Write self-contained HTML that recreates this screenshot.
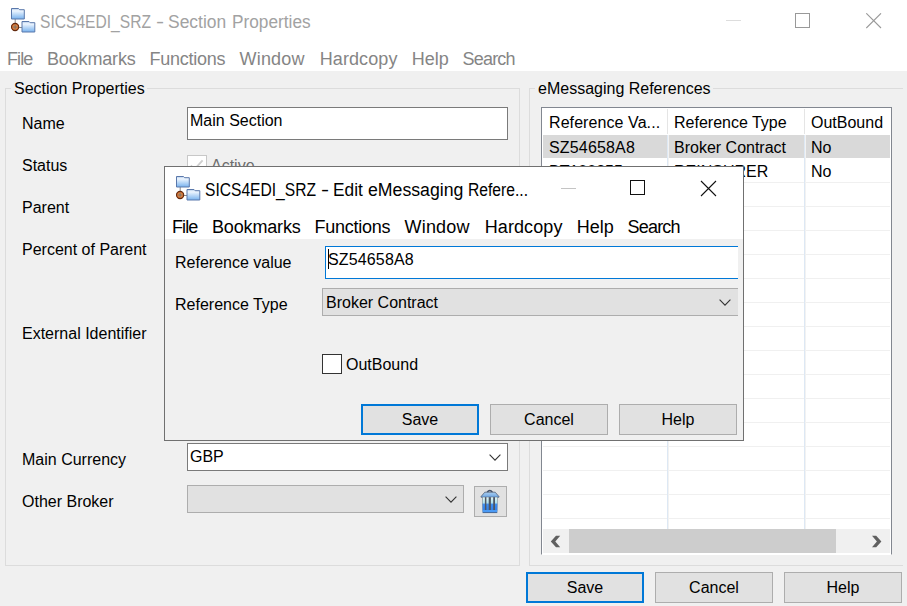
<!DOCTYPE html>
<html><head><meta charset="utf-8">
<style>
*{margin:0;padding:0;box-sizing:border-box}
html,body{width:907px;height:606px;overflow:hidden;background:#f0f0f0;position:relative;font-family:"Liberation Sans",sans-serif;font-size:16px;color:#000}
.a{position:absolute}
.t{position:absolute;white-space:nowrap;line-height:18px;font-size:16px}
.ui{position:absolute;white-space:nowrap;line-height:20px;font-size:18px}
.btn{position:absolute;background:#e1e1e1;border:1px solid #adadad;text-align:center;line-height:28px;padding-top:1px;font-size:16px}
.btn.def{border:2px solid #0078d7;line-height:26px}
.grp{position:absolute;border:1px solid #dcdcdc}
.chev{position:absolute}
</style></head><body>
<!-- main title bar -->
<div class="a" style="left:0;top:0;width:907px;height:71px;background:#fff"></div>
<svg class="a" style="left:10px;top:7px" width="26" height="26" viewBox="0 0 26 26">
<defs><linearGradient id="fg" x1="0" y1="0" x2="0" y2="1"><stop offset="0" stop-color="#b3cbe8"/><stop offset="0.22" stop-color="#eef6ff"/><stop offset="1" stop-color="#78b2ee"/></linearGradient>
<radialGradient id="cg" cx="0.5" cy="0.5" r="0.5"><stop offset="0" stop-color="#ffc070"/><stop offset="1" stop-color="#c85a20"/></radialGradient></defs>
 <path d="M5.2 11.5V17M8 20.5h4" stroke="#8a8a8a" stroke-width="1"/>
 <path d="M1.5 1.5h7l1.2 1.2h4.6v9.3h-12.8z" fill="url(#fg)" stroke="#5a78ab" stroke-width="1"/>
 <path d="M12 14.5h7l1.2 1.2h4.6v9.3h-12.8z" fill="url(#fg)" stroke="#5a78ab" stroke-width="1"/>
 <circle cx="5.1" cy="20" r="3.6" fill="url(#cg)" stroke="#62290e" stroke-width="1.1"/>
 <path d="M2.8 20h4.6M5.1 17.7v4.6" stroke="#6a6060" stroke-width="0.9"/>
</svg>
<div class="ui" style="left:39.6px;top:12px;color:#a2a2a2;transform:scaleX(0.867);transform-origin:0 0;">SICS4EDI_SRZ</div>
<div class="ui" style="left:156px;top:12px;color:#a2a2a2;transform:scaleX(1.35);transform-origin:0 0;">-</div>
<div class="ui" style="left:167.8px;top:12px;color:#a2a2a2;transform:scaleX(0.97);transform-origin:0 0;">Section</div>
<div class="ui" style="left:231.7px;top:12px;color:#a2a2a2;transform:scaleX(0.958);transform-origin:0 0;">Properties</div>
<!-- window controls -->
<div class="a" style="left:726px;top:20px;width:15px;height:1px;background:#ddd"></div>
<div class="a" style="left:795px;top:13px;width:15px;height:15px;border:1px solid #999"></div>
<svg class="a" style="left:866px;top:13px" width="16" height="16" viewBox="0 0 16 16"><path d="M0.3 0.3L15 15M15 0.3L0.3 15" stroke="#999" stroke-width="1.1"/></svg>
<!-- menu -->
<div class="ui" style="left:7px;top:49px;color:#858585;letter-spacing:-0.9px">File</div>
<div class="ui" style="left:47px;top:49px;color:#858585;letter-spacing:-0.16px">Bookmarks</div>
<div class="ui" style="left:149.5px;top:49px;color:#858585;letter-spacing:-0.25px">Functions</div>
<div class="ui" style="left:239.5px;top:49px;color:#858585;letter-spacing:0.2px">Window</div>
<div class="ui" style="left:319.7px;top:49px;color:#858585;letter-spacing:0.1px">Hardcopy</div>
<div class="ui" style="left:411.7px;top:49px;color:#858585;letter-spacing:0px">Help</div>
<div class="ui" style="left:462.5px;top:49px;color:#858585;letter-spacing:-0.8px">Search</div>

<!-- Section Properties group -->
<div class="grp" style="left:5px;top:88px;width:515px;height:478px"></div>
<div class="t" style="left:11px;top:80px;background:#f0f0f0;padding:0 2px 0 3px">Section Properties</div>
<div class="t" style="left:22px;top:115px">Name</div>
<div class="t" style="left:22px;top:157px">Status</div>
<div class="t" style="left:22px;top:199px">Parent</div>
<div class="t" style="left:22px;top:241px">Percent of Parent</div>
<div class="t" style="left:22px;top:325px">External Identifier</div>
<div class="t" style="left:22px;top:451px">Main Currency</div>
<div class="t" style="left:22px;top:493px">Other Broker</div>

<div class="a" style="left:187px;top:107px;width:321px;height:33px;background:#fff;border:1px solid #7a7a7a"></div>
<div class="t" style="left:190px;top:112px">Main Section</div>
<div class="a" style="left:187px;top:155px;width:20px;height:20px;border:1px solid #c8c8c8;background:#fff"></div>
<svg class="a" style="left:189px;top:157px" width="16" height="16"><path d="M1.8 8.5l3.6 3.8 8.2-9" stroke="#cfcfcf" stroke-width="1.9" fill="none"/></svg>
<div class="t" style="left:211px;top:157px;color:#6d6d6d">Active</div>

<div class="a" style="left:187px;top:443px;width:321px;height:28px;background:#fff;border:1px solid #7a7a7a"></div>
<div class="t" style="left:190px;top:448px">GBP</div>
<svg class="a" style="left:489px;top:454px" width="13" height="8"><path d="M0.6 0.6L6 6.2L11.4 0.6" stroke="#333" stroke-width="1.1" fill="none"/></svg>
<div class="a" style="left:187px;top:485px;width:277px;height:28px;background:#e1e1e1;border:1px solid #adadad"></div>
<svg class="a" style="left:445px;top:496px" width="13" height="8"><path d="M0.6 0.6L6 6.2L11.4 0.6" stroke="#333" stroke-width="1.1" fill="none"/></svg>
<div class="a" style="left:474px;top:486px;width:33px;height:31px;background:#e1e1e1;border:1px solid #adadad"></div>
<svg class="a" style="left:480px;top:489px" width="20" height="25" viewBox="0 0 20 25">
 <defs><linearGradient id="tg" x1="0" y1="0" x2="0" y2="1"><stop offset="0" stop-color="#e0f6f6"/><stop offset="0.42" stop-color="#b0e0ec"/><stop offset="0.55" stop-color="#3f8ef0"/><stop offset="1" stop-color="#2f80ec"/></linearGradient>
 <linearGradient id="lg" x1="0" y1="0" x2="0" y2="1"><stop offset="0" stop-color="#a8cdf0"/><stop offset="1" stop-color="#6ea6e2"/></linearGradient></defs>
 <path d="M7 3.4Q9.8 -0.4 12.6 3.4" stroke="#44526a" stroke-width="1.3" fill="none"/>
 <path d="M4.8 3.2H15.2L19 7.6V8.2H1V7.6Z" fill="url(#lg)" stroke="#44526a" stroke-width="0.7"/>
 <path d="M2.2 8.3H17.6L17.2 23.5H2.7Z" fill="#4d5564"/>
 <rect x="2.6" y="8.3" width="2.3" height="13" fill="url(#tg)"/>
 <rect x="6.4" y="8.3" width="2.3" height="13" fill="url(#tg)"/>
 <rect x="10.9" y="8.3" width="2.3" height="13" fill="url(#tg)"/>
 <rect x="15" y="8.3" width="2.3" height="13" fill="url(#tg)"/>
 <path d="M2.5 21H17.3L17.2 23.6H2.7Z" fill="#4a9af5"/>
 <path d="M2.7 23.6H17.2" stroke="#3a5a8a" stroke-width="0.8"/>
</svg>

<!-- eMessaging group -->
<div class="a" style="left:529px;top:88px;width:374px;height:478px;border:1px solid #dcdcdc;border-right:none"></div>
<div class="t" style="left:535px;top:80px;background:#f0f0f0;padding:0 2px 0 3px">eMessaging References</div>
<div class="a" style="left:541px;top:107px;width:351px;height:448px;background:#fff;border:1px solid #828790;border-bottom-color:#fff"></div>
<div class="a" style="left:667px;top:109px;width:1px;height:25px;background:#e5e5e5"></div>
<div class="a" style="left:804px;top:109px;width:1px;height:25px;background:#e5e5e5"></div>
<div class="t" style="left:549px;top:114px;letter-spacing:0.08px">Reference Va...</div>
<div class="t" style="left:674px;top:114px">Reference Type</div>
<div class="t" style="left:811px;top:114px">OutBound</div>
<div class="a" style="left:543px;top:135px;width:124px;height:23px;background:#d9d9d9"></div>
<div class="a" style="left:669px;top:135px;width:135px;height:23px;background:#d9d9d9"></div>
<div class="a" style="left:806px;top:135px;width:84px;height:23px;background:#d9d9d9"></div>
<div class="t" style="left:549px;top:139px;letter-spacing:0.16px">SZ54658A8</div>
<div class="t" style="left:674px;top:139px">Broker Contract</div>
<div class="t" style="left:811px;top:139px">No</div>
<div class="t" style="left:549px;top:163px">BT100255</div>
<div class="t" style="left:674px;top:163px">REINSURER</div>
<div class="t" style="left:811px;top:163px">No</div>
<div class="a" style="left:543px;top:182px;width:347px;height:1px;background:#f0f0f0"></div>
<div class="a" style="left:543px;top:206px;width:347px;height:1px;background:#f0f0f0"></div>
<div class="a" style="left:543px;top:230px;width:347px;height:1px;background:#f0f0f0"></div>
<div class="a" style="left:543px;top:254px;width:347px;height:1px;background:#f0f0f0"></div>
<div class="a" style="left:543px;top:278px;width:347px;height:1px;background:#f0f0f0"></div>
<div class="a" style="left:543px;top:302px;width:347px;height:1px;background:#f0f0f0"></div>
<div class="a" style="left:543px;top:326px;width:347px;height:1px;background:#f0f0f0"></div>
<div class="a" style="left:543px;top:350px;width:347px;height:1px;background:#f0f0f0"></div>
<div class="a" style="left:543px;top:374px;width:347px;height:1px;background:#f0f0f0"></div>
<div class="a" style="left:543px;top:398px;width:347px;height:1px;background:#f0f0f0"></div>
<div class="a" style="left:543px;top:422px;width:347px;height:1px;background:#f0f0f0"></div>
<div class="a" style="left:543px;top:446px;width:347px;height:1px;background:#f0f0f0"></div>
<div class="a" style="left:543px;top:470px;width:347px;height:1px;background:#f0f0f0"></div>
<div class="a" style="left:543px;top:494px;width:347px;height:1px;background:#f0f0f0"></div>
<div class="a" style="left:543px;top:518px;width:347px;height:1px;background:#f0f0f0"></div>
<div class="a" style="left:667px;top:135px;width:1px;height:394px;background:#dde8f4"></div><div class="a" style="left:668px;top:135px;width:1px;height:394px;background:#f2f2f2"></div>
<div class="a" style="left:804px;top:135px;width:1px;height:394px;background:#dde8f4"></div><div class="a" style="left:805px;top:135px;width:1px;height:394px;background:#f2f2f2"></div>
<div class="a" style="left:543px;top:529px;width:347px;height:24px;background:#f0f0f0"></div>
<div class="a" style="left:569px;top:529px;width:267px;height:24px;background:#cdcdcd"></div>
<svg class="a" style="left:549px;top:534px" width="14" height="15"><path d="M1.8 7.5L7 1.8H11.2L6.3 7.5L11.2 13.2H7Z" fill="#606060"/></svg>
<svg class="a" style="left:870px;top:534px" width="14" height="15"><path d="M11.4 7.5L6.2 1.8H2L6.9 7.5L2 13.2H6.2Z" fill="#606060"/></svg>
<div class="btn def" style="left:526px;top:572px;width:118px;height:31px">Save</div>
<div class="btn" style="left:655px;top:572px;width:118px;height:31px">Cancel</div>
<div class="btn" style="left:784px;top:572px;width:118px;height:31px">Help</div>
<div class="a" style="left:164px;top:166px;width:580px;height:275px;background:#f0f0f0;border:1px solid #707070"></div>
<div class="a" style="left:165px;top:167px;width:578px;height:72px;background:#fff"></div>
<svg class="a" style="left:175px;top:175px" width="26" height="26" viewBox="0 0 26 26">

 <path d="M5.2 11.5V17M8 20.5h4" stroke="#8a8a8a" stroke-width="1"/>
 <path d="M1.5 1.5h7l1.2 1.2h4.6v9.3h-12.8z" fill="url(#fg)" stroke="#5a78ab" stroke-width="1"/>
 <path d="M12 14.5h7l1.2 1.2h4.6v9.3h-12.8z" fill="url(#fg)" stroke="#5a78ab" stroke-width="1"/>
 <circle cx="5.1" cy="20" r="3.6" fill="url(#cg)" stroke="#62290e" stroke-width="1.1"/>
 <path d="M2.8 20h4.6M5.1 17.7v4.6" stroke="#6a6060" stroke-width="0.9"/>
</svg>
<div class="ui" style="left:204.6px;top:180px;transform:scaleX(0.867);transform-origin:0 0;">SICS4EDI_SRZ</div>
<div class="ui" style="left:321px;top:180px;transform:scaleX(1.35);transform-origin:0 0;">-</div>
<div class="ui" style="left:333.2px;top:180px;transform:scaleX(0.96);transform-origin:0 0;">Edit</div>
<div class="ui" style="left:367.6px;top:180px;transform:scaleX(0.983);transform-origin:0 0;">eMessaging</div>
<div class="ui" style="left:468.4px;top:180px;transform:scaleX(0.87);transform-origin:0 0;">Refere...</div>
<div class="a" style="left:561px;top:188px;width:15px;height:1px;background:#c4c4c4"></div>
<div class="a" style="left:630px;top:180px;width:15px;height:15px;border:1px solid #111"></div>
<svg class="a" style="left:700px;top:180px" width="17" height="17" viewBox="0 0 17 17"><path d="M1 1L16 16M16 1L1 16" stroke="#111" stroke-width="1.1"/></svg>
<div class="ui" style="left:172px;top:217px;letter-spacing:-0.9px">File</div>
<div class="ui" style="left:212px;top:217px;letter-spacing:-0.16px">Bookmarks</div>
<div class="ui" style="left:314.5px;top:217px;letter-spacing:-0.25px">Functions</div>
<div class="ui" style="left:404.5px;top:217px;letter-spacing:0.2px">Window</div>
<div class="ui" style="left:484.7px;top:217px;letter-spacing:0.1px">Hardcopy</div>
<div class="ui" style="left:576.7px;top:217px;letter-spacing:0px">Help</div>
<div class="ui" style="left:627.5px;top:217px;letter-spacing:-0.8px">Search</div>
<div class="t" style="left:175px;top:254px">Reference value</div>
<div class="t" style="left:175px;top:296px">Reference Type</div>
<div class="a" style="left:325px;top:246px;width:413px;height:33px;background:#fff;border:1px solid #0078d7;border-right:none"></div>
<div class="a" style="left:738px;top:239px;width:5px;height:201px;background:#f0f0f0"></div>
<div class="a" style="left:328px;top:249px;width:1px;height:20px;background:#000"></div>
<div class="t" style="left:328px;top:251px;letter-spacing:0.14px">SZ54658A8</div>
<div class="a" style="left:322px;top:288px;width:416px;height:28px;background:#e1e1e1;border:1px solid #adadad;border-right:none"></div>
<div class="t" style="left:326px;top:294px">Broker Contract</div>
<svg class="a" style="left:719px;top:299px" width="13" height="8"><path d="M0.6 0.6L6 6.2L11.4 0.6" stroke="#333" stroke-width="1.1" fill="none"/></svg>
<div class="a" style="left:322px;top:354px;width:20px;height:20px;background:#fff;border:1px solid #333"></div>
<div class="t" style="left:346px;top:356px">OutBound</div>
<div class="btn def" style="left:361px;top:404px;width:118px;height:31px">Save</div>
<div class="btn" style="left:490px;top:404px;width:118px;height:31px">Cancel</div>
<div class="btn" style="left:619px;top:404px;width:118px;height:31px">Help</div>
</body></html>
